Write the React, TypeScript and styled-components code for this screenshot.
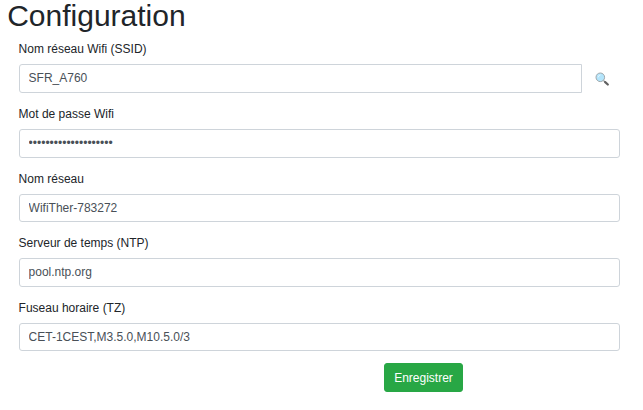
import React from "react";
import styled, { createGlobalStyle } from "styled-components";

const GlobalStyle = createGlobalStyle`
  *, *::before, *::after { box-sizing: border-box; }
  body {
    margin: 0;
    background: #fff;
    color: #212529;
    font-family: "Liberation Sans", Arial, sans-serif;
    font-size: 12px;
    line-height: 18px;
    overflow: hidden;
  }
`;

const Page = styled.main`
  padding: 0 23px 0 7.2px;
`;

const Title = styled.h1`
  margin: -2px 0 6.4px;
  font-size: 30px;
  font-weight: 500;
  line-height: 36px;
`;

const Form = styled.form`
  padding-left: 11.4px;
`;

const Field = styled.div`
  height: 64.6px;
`;

const Label = styled.label`
  display: block;
  margin-bottom: 6px;
`;

const InputRow = styled.div`
  display: flex;
`;

const Input = styled.input<{ $joined?: boolean }>`
  flex: 1;
  min-width: 0;
  height: 28.6px;
  padding: ${(p) => (p.$joined ? "3.8px 9px 5px" : "4.4px 9px")};
  border: 1px solid #ced4da;
  border-radius: ${(p) => (p.$joined ? "3px 0 0 3px" : "3px")};
  background: #fff;
  color: #495057;
  font: inherit;
  outline: none;
`;

const SearchButton = styled.button`
  width: 38px;
  padding: 0 0 0 2px;
  border: 0;
  background: transparent;
  display: flex;
  align-items: center;
  justify-content: center;
`;

const Actions = styled.div`
  display: flex;
  padding-left: 365.4px;
`;

const SaveButton = styled.button`
  width: 79px;
  height: 29px;
  padding: 0;
  border: 1px solid #28a745;
  border-radius: 3px;
  background: #28a745;
  color: #fff;
  font: inherit;
`;

const Magnifier = () => (
  <svg width="14" height="14" viewBox="0 0 14 14" fill="none">
    <path d="M8.4 8.4 10.2 10.2" stroke="#8b9194" strokeWidth="1.3" />
    <path d="M10.2 10.1 12.8 12.5" stroke="#616161" strokeWidth="2.2" strokeLinecap="round" />
    <circle cx="5.3" cy="5.3" r="4.3" fill="#b3e5fc" stroke="#a0a7aa" strokeWidth="1" />
    <path d="M3.1 5a2.4 2.4 0 0 1 2-2" stroke="#e1f5fe" strokeWidth="1" strokeLinecap="round" />
  </svg>
);

const fields = [
  { id: "ssid", label: "Nom réseau Wifi (SSID)", value: "SFR_A760", search: true },
  { id: "password", label: "Mot de passe Wifi", value: "abcdefghijklmnopqrst", type: "password" },
  { id: "name", label: "Nom réseau", value: "WifiTher-783272" },
  { id: "ntp", label: "Serveur de temps (NTP)", value: "pool.ntp.org" },
  { id: "tz", label: "Fuseau horaire (TZ)", value: "CET-1CEST,M3.5.0,M10.5.0/3" },
];

export default function App() {
  return (
    <Page>
      <GlobalStyle />
      <Title>Configuration</Title>
      <Form onSubmit={(e) => e.preventDefault()}>
        {fields.map((f) => (
          <Field key={f.id}>
            <Label htmlFor={f.id}>{f.label}</Label>
            <InputRow>
              <Input id={f.id} type={f.type ?? "text"} defaultValue={f.value} $joined={f.search} />
              {f.search && (
                <SearchButton type="button" aria-label="Rechercher">
                  <Magnifier />
                </SearchButton>
              )}
            </InputRow>
          </Field>
        ))}
        <Actions>
          <SaveButton type="submit">Enregistrer</SaveButton>
        </Actions>
      </Form>
    </Page>
  );
}
